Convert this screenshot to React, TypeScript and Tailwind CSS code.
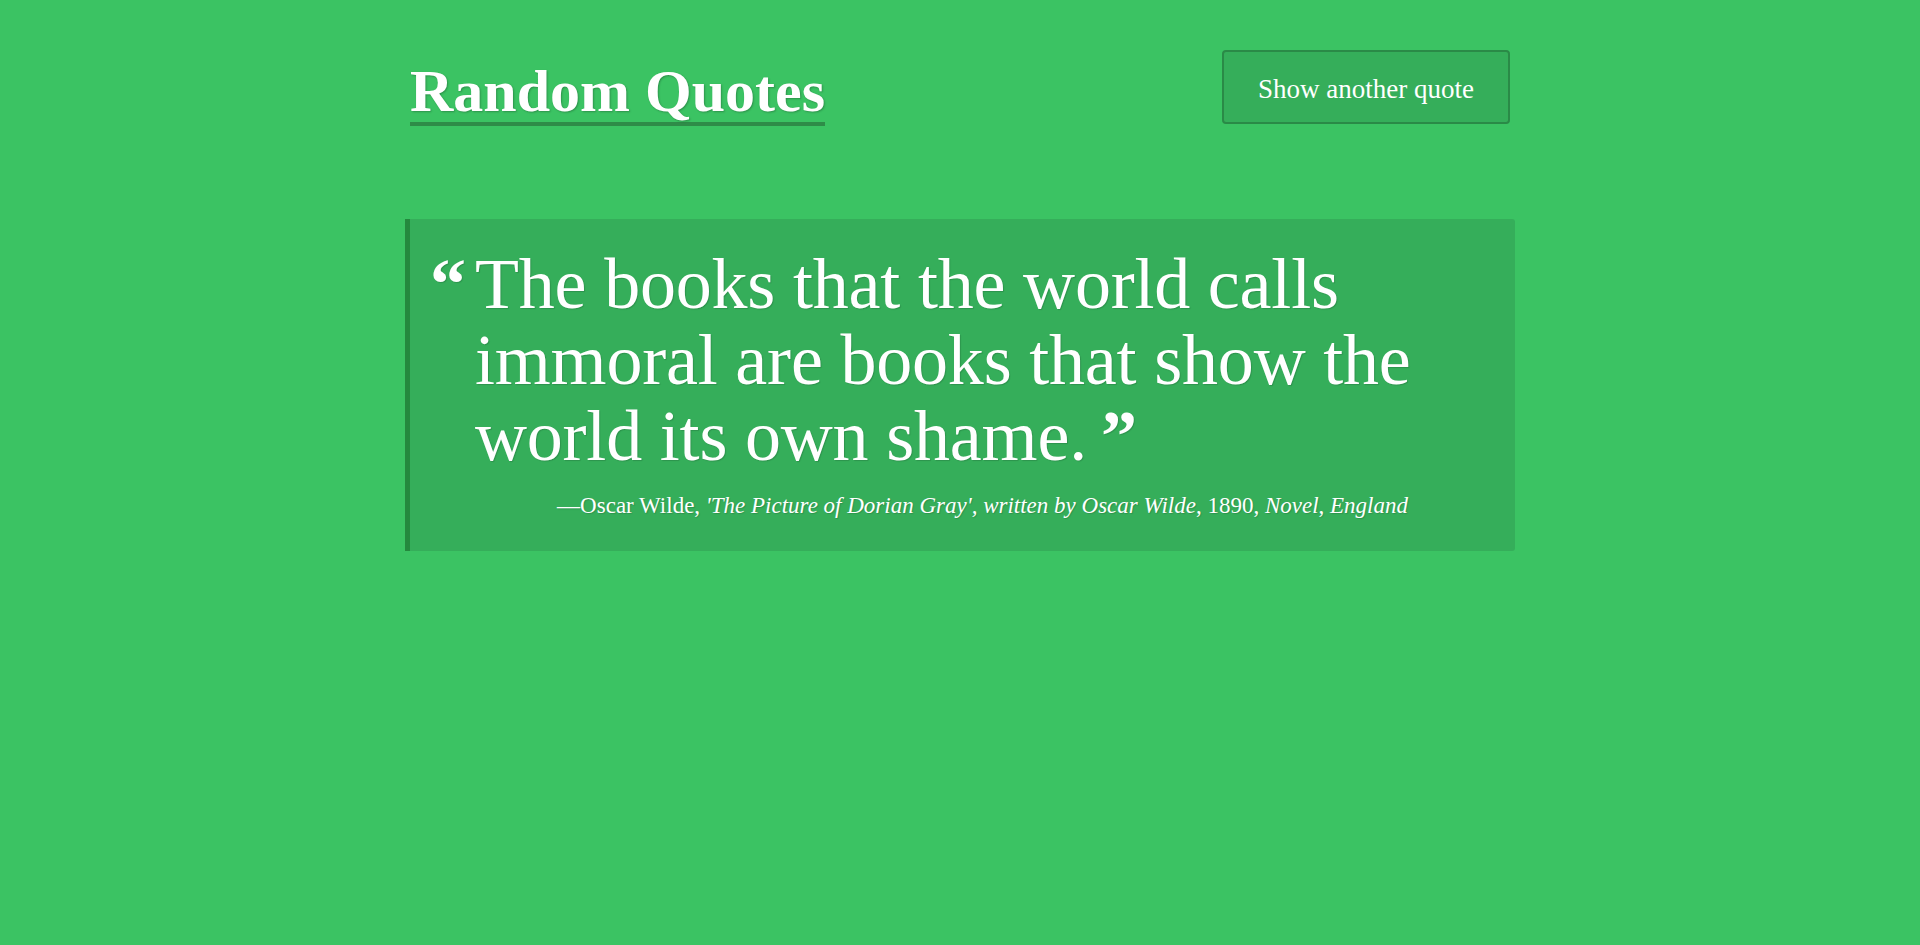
import React from "react";

const serif = "font-['Liberation_Serif','Times_New_Roman',serif]";

export default function App() {
  return (
    <div className={`min-h-screen w-full bg-[#3bc363] text-white ${serif}`}>
      <div className="mx-auto w-[1110px] pt-[50px]">
        <header className="flex items-start justify-between px-[5px]">
          <h1 className="mt-[10px] inline-block border-b-4 border-[#2e8c48] text-[60px] font-bold leading-[62px] [text-shadow:1px_1px_2px_rgba(0,0,0,0.25)]">
            Random Quotes
          </h1>
          <button
            type="button"
            className="flex h-[74px] w-[288px] items-center justify-center rounded-[4px] border-2 border-[#2a8a47] bg-[#35ae5a] pt-[4px] text-[27px] leading-none text-white"
          >
            Show another quote
          </button>
        </header>

        <blockquote className="mt-[93px] flex rounded-r-[3px] border-l-[5px] border-[#24893e] bg-[#35ae5a] pb-[30px] pl-[20px] pr-[35px] pt-[27px]">
          <span className="w-[45px] shrink-0 text-[72px] font-bold leading-[76px] [text-shadow:1px_1px_1px_rgba(0,0,0,0.15)]">
            “
          </span>
          <div className="flex-1">
            <p className="text-[72px] leading-[76px] tracking-[-0.2px] [text-shadow:1px_1px_1px_rgba(0,0,0,0.15)]">
              The books that the world calls immoral are books that show the
              world its own shame.
              <span className="ml-[14px] font-bold">”</span>
            </p>
            <p className="mr-[72px] mt-[17px] text-right text-[23px] leading-[30px] [text-shadow:1px_1px_1px_rgba(0,0,0,0.15)]">
              —Oscar Wilde,{" "}
              <cite className="italic">
                'The Picture of Dorian Gray', written by Oscar Wilde
              </cite>
              , 1890, <span className="italic">Novel</span>,{" "}
              <span className="italic">England</span>
            </p>
          </div>
        </blockquote>
      </div>
    </div>
  );
}
